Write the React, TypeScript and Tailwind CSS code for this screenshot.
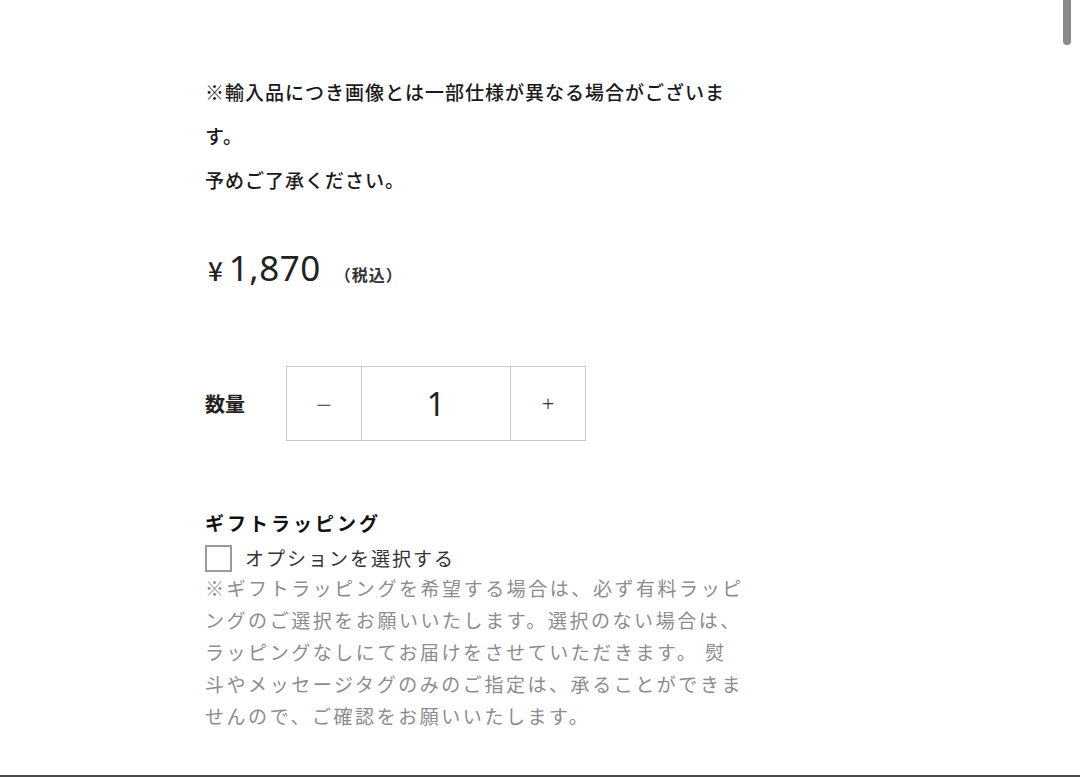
import { useState } from "react";

const jp = { fontFamily: '"Noto Sans CJK JP", "Noto Sans", sans-serif' };
const num = { fontFamily: '"Noto Sans", "Noto Sans CJK JP", sans-serif' };

function QuantityStepper() {
  const [qty, setQty] = useState(1);
  return (
    <div className="flex h-[75px] border border-[#c9c9c9]">
      <button
        className="w-[74px] flex items-center justify-center text-[28px] text-[#333] font-extralight"
        style={num}
        onClick={() => setQty((q) => Math.max(1, q - 1))}
      >
        −
      </button>
      <div
        className="w-[150px] border-x border-[#c9c9c9] flex items-center justify-center text-[32px] font-normal text-[#222]"
        style={num}
      >
        {qty}
      </div>
      <button
        className="w-[74px] flex items-center justify-center text-[22px] text-[#333] font-light"
        style={num}
        onClick={() => setQty((q) => q + 1)}
      >
        +
      </button>
    </div>
  );
}

export default function App() {
  const [wrap, setWrap] = useState(false);

  return (
    <div className="relative h-[777px] bg-white border-b-2 border-[#4a4a4a] overflow-hidden" style={jp}>
      {/* scroll thumb */}
      <div className="absolute right-[9px] top-0 w-[8px] h-[45px] rounded-b-full bg-[#8a8a8a]" />

      <div className="pl-[205px] pt-[70px] w-[745px]">
        <p className="text-[19px] leading-[44px] tracking-[1px] text-[#1a1a1a] font-medium">
          ※輸入品につき画像とは一部仕様が異なる場合がございます。
          <br />
          予めご了承ください。
        </p>

        <div className="mt-[40px] flex items-baseline h-[44px]">
          <span className="text-[26px] text-[#222] font-medium mr-[6px] ml-[3px]">¥</span>
          <span className="text-[35px] font-normal text-[#222] tracking-[0.5px]" style={num}>1,870</span>
          <span className="ml-[14px] text-[16px] font-bold text-[#333] tracking-[1px]">（税込）</span>
        </div>

        <div className="mt-[80px] flex items-center">
          <span className="w-[81px] text-[20px] font-bold text-[#222]">数量</span>
          <QuantityStepper />
        </div>

        <div className="mt-[67px]">
          <h3 className="text-[19px] leading-[30px] font-bold tracking-[3px] text-[#111]">ギフトラッピング</h3>
          <label className="flex items-center h-[40px] cursor-pointer">
            <input
              type="checkbox"
              checked={wrap}
              onChange={(e) => setWrap(e.target.checked)}
              className="appearance-none w-[27px] h-[27px] border-2 border-[#9a9a9a] bg-white checked:bg-[#333]"
            />
            <span className="ml-[13px] text-[19px] tracking-[2px] text-[#333]">オプションを選択する</span>
          </label>
          <p className="text-[19px] leading-[32px] tracking-[2.55px] text-[#8c8c8c] -mt-[6px]">
            ※ギフトラッピングを希望する場合は、必ず有料ラッピングのご選択をお願いいたします。選択のない場合は、ラッピングなしにてお届けをさせていただきます。 熨斗やメッセージタグのみのご指定は、承ることができませんので、ご確認をお願いいたします。
          </p>
        </div>
      </div>
    </div>
  );
}
